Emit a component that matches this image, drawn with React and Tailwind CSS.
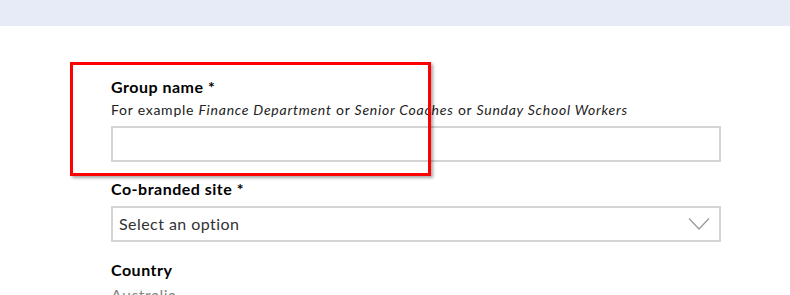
export default function App() {
  return (
    <div className="relative w-[790px] h-[295px] overflow-hidden bg-white font-['Lato','Open_Sans',sans-serif] text-[#1a1a1a]">
      <div className="h-[26px] bg-[#e7ebf7]" />
      <div className="pl-[111px] pt-[50px] w-[721px]">
        <label className="block text-[16px] leading-[22px] font-bold tracking-[0.5px] text-black">
          Group name *
        </label>
        <p className="mt-[2px] text-[14px] leading-[20px] tracking-[0.75px] text-[#222]">
          For example <em>Finance Department</em> or <em>Senior Coaches</em> or{" "}
          <em>Sunday School Workers</em>
        </p>
        <input
          type="text"
          className="mt-[6px] block w-full h-[36px] border-2 border-[#d4d4d4] bg-white outline-none"
        />
        <label className="mt-[16px] block text-[16px] leading-[22px] font-bold tracking-[0.5px] text-black">
          Co-branded site *
        </label>
        <div className="mt-[6px] flex items-center justify-between h-[36px] border-2 border-[#d4d4d4] bg-white pl-[6px] pr-[9px]">
          <span className="text-[16px] tracking-[0.45px] text-[#333]">Select an option</span>
          <svg width="22" height="14" viewBox="0 0 22 14" fill="none">
            <path d="M1 1.5 L11 12 L21 1.5" stroke="#9a9a9a" strokeWidth="1.3" />
          </svg>
        </div>
        <label className="mt-[17px] block text-[16px] leading-[22px] font-bold tracking-[0.5px] text-black">
          Country
        </label>
        <p className="mt-[4px] text-[16px] leading-[20px] tracking-[0.45px] text-[#888]">Australia</p>
      </div>
      <div className="absolute left-[70px] top-[62px] w-[361px] h-[114px] border-[3px] border-[#ff0000] shadow-[2px_2px_3px_rgba(0,0,0,0.35)]" />
    </div>
  );
}
